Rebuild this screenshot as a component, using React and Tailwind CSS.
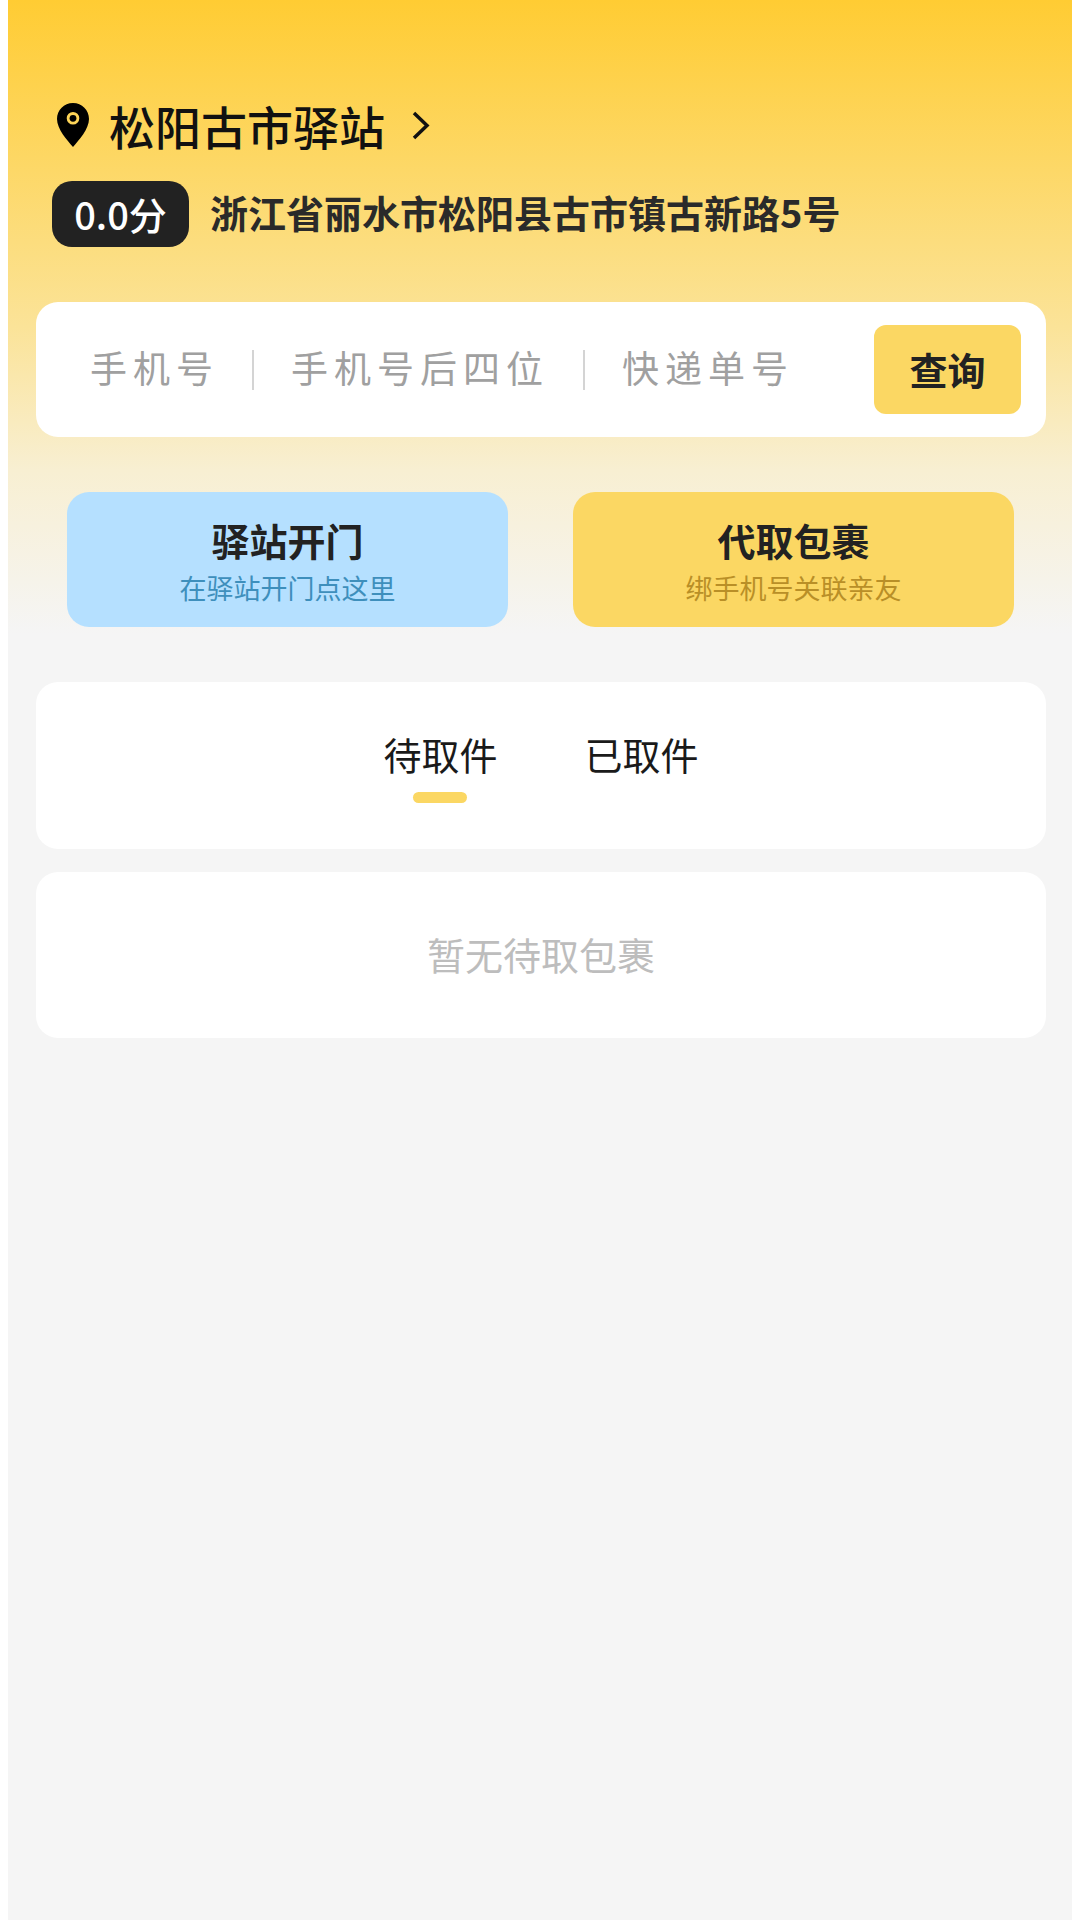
import React from "react";

const font = "font-['Noto_Sans_CJK_SC','Noto_Sans',sans-serif]";

const ActionCard = ({ title, sub, bg, subColor }) => (
    <div className={`${bg} w-[441px] h-[135px] rounded-[22px] flex flex-col items-center pt-[25px]`}>
        <div className="text-[38px] leading-[46px] font-bold text-[#222222]">{title}</div>
        <div className={`mt-[7px] text-[27px] leading-[36px] ${subColor}`}>{sub}</div>
    </div>
);

const App = () => {
    return (
        <div className={`${font} w-[1080px] h-[1920px] bg-white px-[8px]`}>
            <div className="h-full bg-[linear-gradient(to_bottom,#ffcc33_0%,#fbe398_17%,#f8efd2_24.5%,#f5f5f5_33%)] flex flex-col">
                {/* Station header */}
                <div className="mt-[97px] pl-[49px] flex items-center h-[56px]">
                    <svg width="33" height="44" viewBox="0 0 33 44" className="shrink-0">
                        <path
                            fillRule="evenodd"
                            d="M16 0C7 0 0 7 0 16c0 10 10 21 16 28 6-7 16-18 16-28C32 7 25 0 16 0Zm0 9a6.300 6.300 0 1 1 0 12.600A6.300 6.300 0 0 1 16 9Z"
                            fill="#000000"
                        />
                        <circle cx="16" cy="15.300" r="3.400" fill="#000000" />
                    </svg>
                    <span className="ml-[19px] text-[46px] leading-[56px] font-medium text-[#111111]">松阳古市驿站</span>
                    <svg width="18" height="29" viewBox="0 0 18 29" fill="none" className="ml-[27px] shrink-0">
                        <path d="M2 2l13 12.500L2 27" stroke="#111111" strokeWidth="3.500" />
                    </svg>
                </div>
                <div className="mt-[28px] pl-[44px] flex items-center">
                    <div className="w-[137px] h-[66px] rounded-[20px] bg-[#222222] text-white text-[38px] font-medium flex items-center justify-center pb-[2px]">
                        0.0分
                    </div>
                    <span className="ml-[21px] text-[38px] font-bold text-[#2a2a2a] leading-[62px] pb-[4px]">浙江省丽水市松阳县古市镇古新路5号</span>
                </div>

                {/* Search box */}
                <div className="mt-[55px] ml-[28px] mr-[26px] h-[135px] rounded-[22px] bg-white flex items-center pl-[54px] pr-[25px] text-[37px] text-[#a0a0a0] tracking-[6px]">
                    <span className="w-[122px] whitespace-nowrap pb-[3px]">手机号</span>
                    <div className="ml-[40px] w-[2px] h-[40px] bg-[#d4d4d4]" />
                    <span className="ml-[37px] w-[258px] whitespace-nowrap pb-[3px]">手机号后四位</span>
                    <div className="ml-[34px] w-[2px] h-[40px] bg-[#d4d4d4]" />
                    <span className="ml-[37px] whitespace-nowrap pb-[3px]">快递单号</span>
                    <div className="ml-auto w-[147px] h-[89px] rounded-[12px] bg-[#fbd763] flex items-center justify-center text-[38px] font-bold tracking-normal text-[#222222] pb-[2px]">
                        查询
                    </div>
                </div>

                {/* Action cards */}
                <div className="mt-[55px] pl-[59px] pr-[58px] flex justify-between">
                    <ActionCard title="驿站开门" sub="在驿站开门点这里" bg="bg-[#b5e0ff]" subColor="text-[#3e8fbc]" />
                    <ActionCard title="代取包裹" sub="绑手机号关联亲友" bg="bg-[#fbd763]" subColor="text-[#b98f27]" />
                </div>

                {/* Tabs */}
                <div className="mt-[55px] ml-[28px] mr-[26px] h-[167px] rounded-[22px] bg-white flex justify-center">
                    <div className="flex gap-[87px] pt-[47px]">
                        <div className="flex flex-col items-center">
                            <span className="text-[38px] leading-[50px] text-[#1a1a1a]">待取件</span>
                            <div className="mt-[13px] w-[54px] h-[11px] rounded-full bg-[#fbd763]" />
                        </div>
                        <span className="text-[38px] leading-[50px] text-[#1a1a1a]">已取件</span>
                    </div>
                </div>

                {/* Empty list */}
                <div className="mt-[23px] ml-[28px] mr-[26px] h-[166px] rounded-[22px] bg-white flex items-center justify-center text-[38px] text-[#bdbdbd] pb-[3px]">
                    暂无待取包裹
                </div>
            </div>
        </div>
    );
};

export default App;
